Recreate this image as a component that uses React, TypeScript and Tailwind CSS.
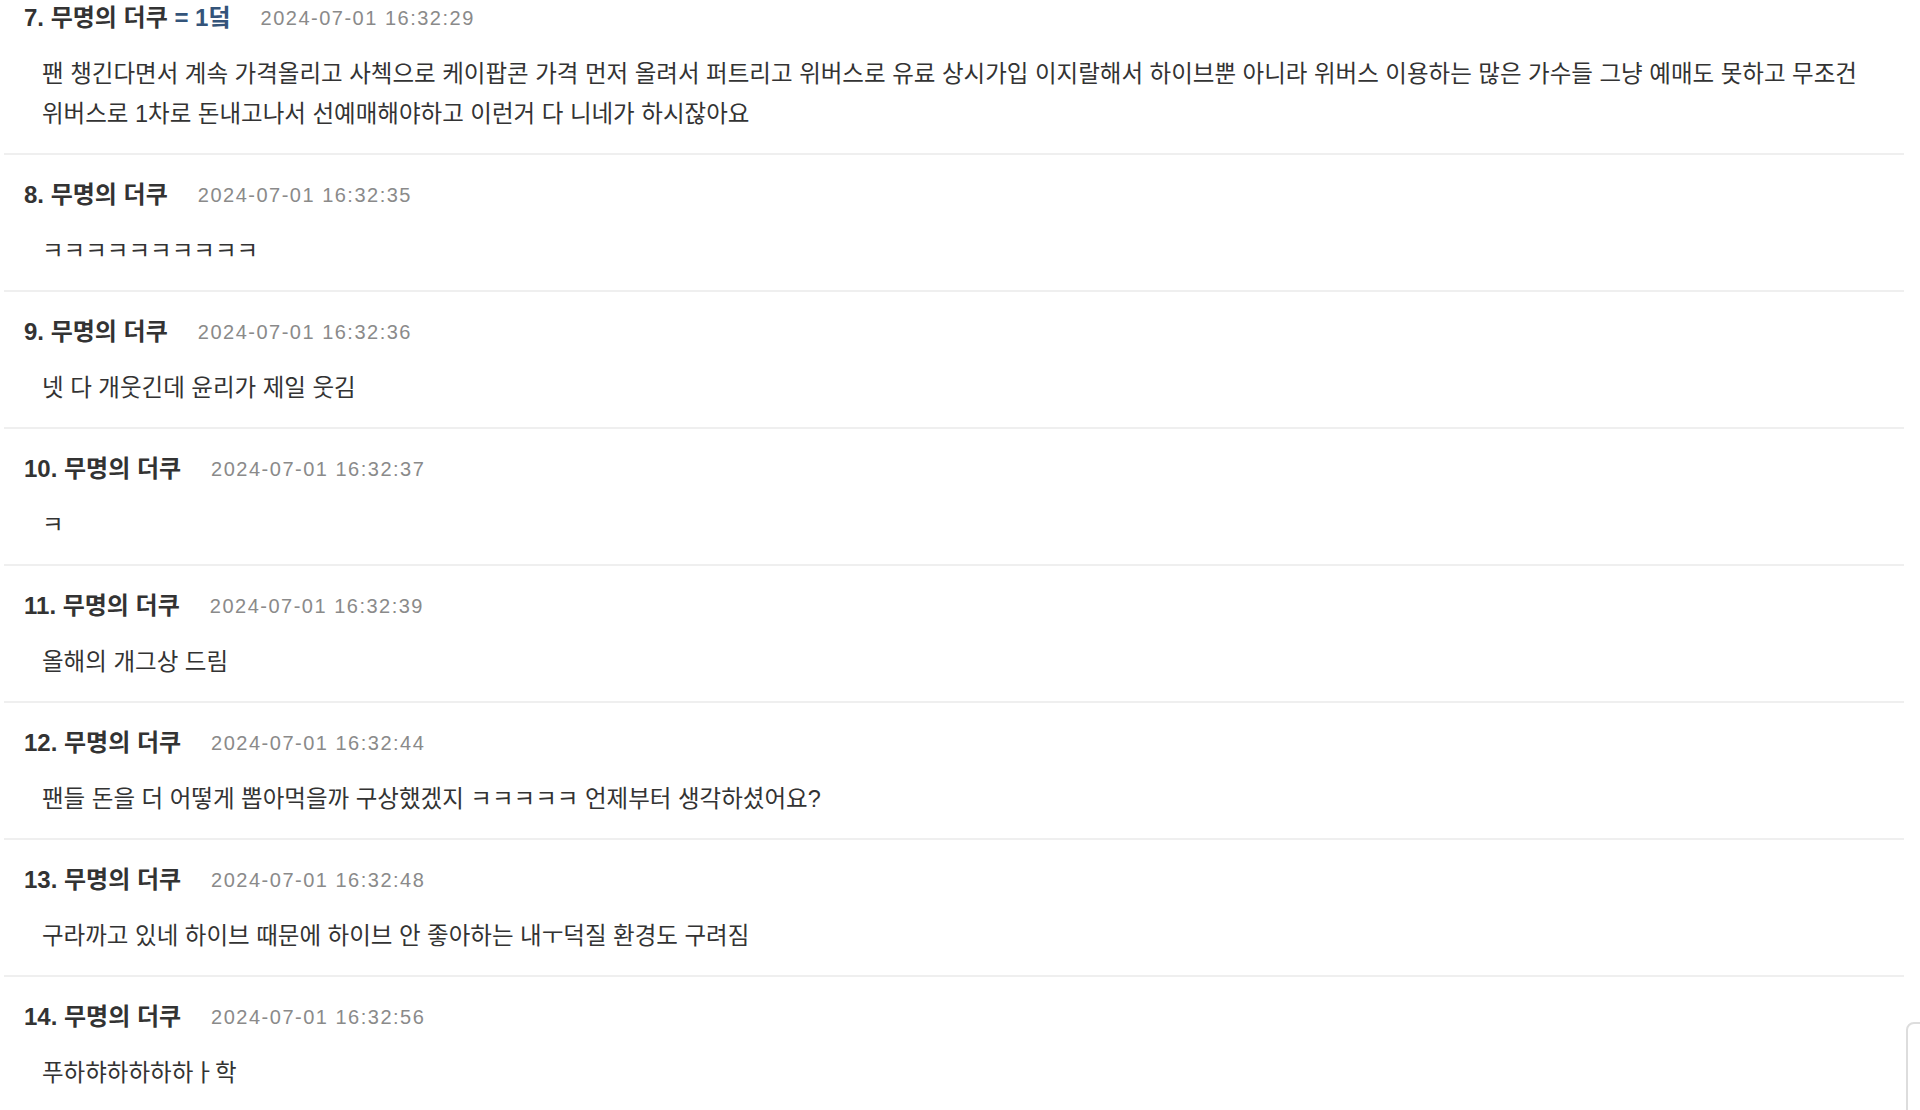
import React from 'react';

interface Comment {
  no: number;
  tag?: string;
  time: string;
  body: string;
}

const COMMENTS: Comment[] = [
  {
    no: 7,
    tag: '= 1덬',
    time: '2024-07-01 16:32:29',
    body: '팬 챙긴다면서 계속 가격올리고 사첵으로 케이팝콘 가격 먼저 올려서 퍼트리고 위버스로 유료 상시가입 이지랄해서 하이브뿐 아니라 위버스 이용하는 많은 가수들 그냥 예매도 못하고 무조건 위버스로 1차로 돈내고나서 선예매해야하고 이런거 다 니네가 하시잖아요',
  },
  { no: 8, time: '2024-07-01 16:32:35', body: 'ㅋㅋㅋㅋㅋㅋㅋㅋㅋㅋ' },
  { no: 9, time: '2024-07-01 16:32:36', body: '넷 다 개웃긴데 윤리가 제일 웃김' },
  { no: 10, time: '2024-07-01 16:32:37', body: 'ㅋ' },
  { no: 11, time: '2024-07-01 16:32:39', body: '올해의 개그상 드림' },
  { no: 12, time: '2024-07-01 16:32:44', body: '팬들 돈을 더 어떻게 뽑아먹을까 구상했겠지 ㅋㅋㅋㅋㅋ 언제부터 생각하셨어요?' },
  { no: 13, time: '2024-07-01 16:32:48', body: '구라까고 있네 하이브 때문에 하이브 안 좋아하는 내ㅜ덕질 환경도 구려짐' },
  { no: 14, time: '2024-07-01 16:32:56', body: '푸하햐하하하하ㅏ학' },
];

const FONT = { fontFamily: '"Liberation Sans", "Noto Sans CJK KR", sans-serif' };

function CommentItem({ c }: { c: Comment }) {
  return (
    <li className="pt-[24px] pb-[19px] pl-[20px] pr-[20px] border-b-2 border-[#efefef]">
      <div className="flex items-center h-[32px]">
        <span className="text-[24px] font-bold text-[#333333] leading-[32px]">
          {c.no}. 무명의 더쿠
          {c.tag && <span className="text-[#34547a]"> {c.tag}</span>}
        </span>
        <span className="ml-[30px] text-[20px] tracking-[1.5px] text-[#8a8a8a] leading-[32px]">{c.time}</span>
      </div>
      <p className="mt-[20px] pl-[18px] pr-[8px] text-[23.5px] leading-[40px] text-[#333333]">{c.body}</p>
    </li>
  );
}

export default function App() {
  return (
    <div className="relative h-[1110px] overflow-hidden bg-white" style={FONT}>
      <ul className="-mt-[22px] ml-[4px] w-[1900px]">
        {COMMENTS.map((c) => (
          <CommentItem key={c.no} c={c} />
        ))}
      </ul>
      {/* floating panel edge at the bottom right */}
      <div className="absolute left-[1906px] top-[1022px] w-[60px] h-[200px] rounded-lg border-2 border-[#dddddd] bg-white" />
    </div>
  );
}
